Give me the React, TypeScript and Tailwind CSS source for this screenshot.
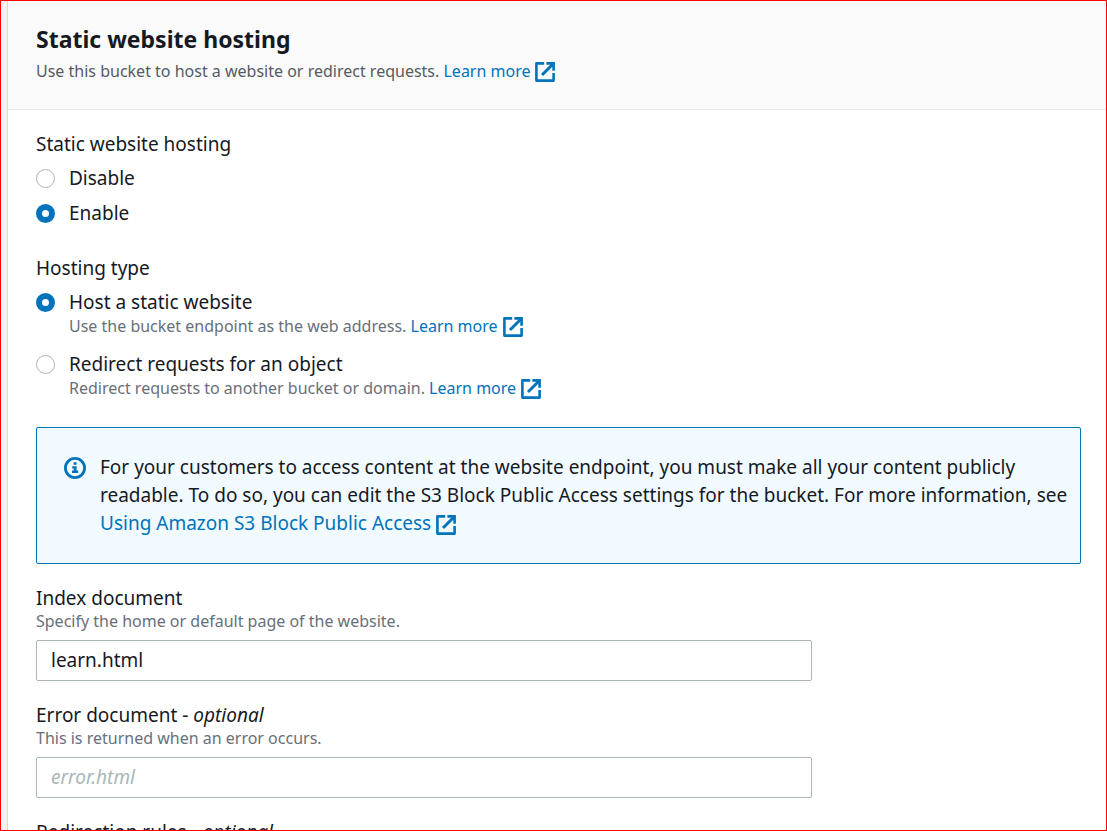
import { useState } from "react";
import type { ReactNode } from "react";

function ExternalIcon() {
  return (
    <svg
      className="ml-[5px] inline-block h-5 w-5 shrink-0 align-[-5px]"
      viewBox="0 0 20 20"
      fill="none"
      stroke="currentColor"
      strokeWidth="2.6"
      strokeLinejoin="round"
      aria-hidden="true"
    >
      <path d="M9.2 1.4H1.4v17.2h17.2V11" />
      <path d="M11.4 1.4h7.2v7.4" strokeLinejoin="miter" />
      <path d="M18 2 7 13" strokeWidth="3" />
    </svg>
  );
}

function InfoIcon() {
  return (
    <svg className="mt-1 h-[22px] w-[22px] shrink-0 text-[#0073bb]" viewBox="0 0 22 22" aria-hidden="true">
      <circle cx="11" cy="11" r="9.6" fill="none" stroke="currentColor" strokeWidth="2.8" />
      <path
        fill="currentColor"
        d="M9.6 5.2h3v2.6h-3zM8.2 9.2h4.4v4.4h1.6v2.4H8v-2.4h1.7v-2H8.2z"
      />
    </svg>
  );
}

function ExternalLink({ children }: { children: ReactNode }) {
  return (
    <a href="#" className="text-[#0073bb] hover:underline">
      {children}
      <ExternalIcon />
    </a>
  );
}

type RadioProps = {
  id: string;
  name: string;
  label: string;
  checked: boolean;
  onChange: () => void;
  children?: ReactNode;
};

function Radio({ id, name, label, checked, onChange, children }: RadioProps) {
  return (
    <div className="flex items-start gap-3.5">
      <input
        id={id}
        type="radio"
        name={name}
        checked={checked}
        onChange={onChange}
        className="mt-[3px] h-[19px] w-[19px] shrink-0 appearance-none rounded-full border border-[#aab7b8] bg-white checked:border-6 checked:border-[#0073bb]"
      />
      <div>
        <label htmlFor={id} className="block leading-6">
          {label}
        </label>
        {children && <p className="text-base leading-6 text-[#687078]">{children}</p>}
      </div>
    </div>
  );
}

type FieldProps = {
  id: string;
  label: string;
  optional?: boolean;
  hint: string;
  value?: string;
  placeholder?: string;
};

function Field({ id, label, optional, hint, value, placeholder }: FieldProps) {
  return (
    <div className="mt-[22px] max-w-[776px]">
      <label htmlFor={id} className="block leading-6">
        {label}
        {optional && (
          <>
            {" - "}
            <i>optional</i>
          </>
        )}
      </label>
      <p className="text-base leading-[22px] text-[#687078]">{hint}</p>
      <input
        id={id}
        type="text"
        defaultValue={value}
        placeholder={placeholder}
        className="mt-2 block h-[41px] w-full rounded-xs border border-[#aab7b8] bg-white px-3.5 pb-0.5 placeholder:text-[#aab7b8] placeholder:italic"
      />
    </div>
  );
}

export default function App() {
  const [enabled, setEnabled] = useState(true);
  const [redirect, setRedirect] = useState(false);

  return (
    <div className="h-screen overflow-hidden border border-[#ff0000] bg-[#f2f3f3] pl-1.5 font-['Noto_Sans',sans-serif] text-[19px] text-[#16191f]">
      <main className="min-h-full border-l border-[#d5dbdb] bg-white">
        <header className="border-b border-[#eaeded] bg-[#fafafa] px-7 pt-[23px] pb-[26px]">
          <h1 className="text-[23px] leading-[30px] font-bold">Static website hosting</h1>
          <p className="mt-[5px] text-base leading-6 text-[#545b64]">
            Use this bucket to host a website or redirect requests. <ExternalLink>Learn more</ExternalLink>
          </p>
        </header>

        <form className="pt-[22px] pr-[25px] pl-7">
          <fieldset>
            <legend className="leading-6">Static website hosting</legend>
            <div className="mt-2.5 flex flex-col gap-[11px]">
              <Radio id="disable" name="hosting" label="Disable" checked={!enabled} onChange={() => setEnabled(false)} />
              <Radio id="enable" name="hosting" label="Enable" checked={enabled} onChange={() => setEnabled(true)} />
            </div>
          </fieldset>

          <fieldset className="mt-[31px]">
            <legend className="leading-6">Hosting type</legend>
            <div className="mt-2.5 flex flex-col gap-3.5">
              <Radio
                id="static"
                name="type"
                label="Host a static website"
                checked={!redirect}
                onChange={() => setRedirect(false)}
              >
                Use the bucket endpoint as the web address. <ExternalLink>Learn more</ExternalLink>
              </Radio>
              <Radio
                id="redirect"
                name="type"
                label="Redirect requests for an object"
                checked={redirect}
                onChange={() => setRedirect(true)}
              >
                Redirect requests to another bucket or domain. <ExternalLink>Learn more</ExternalLink>
              </Radio>
            </div>
          </fieldset>

          <div className="mt-[27px] flex gap-3.5 rounded-xs border border-[#0073bb] bg-[#f1faff] pt-[25px] pr-2 pb-[26px] pl-[27px]">
            <InfoIcon />
            <p className="leading-7">
              For your customers to access content at the website endpoint, you must make all your content publicly
              readable. To do so, you can edit the S3 Block Public Access settings for the bucket. For more information,
              see <ExternalLink>Using Amazon S3 Block Public Access</ExternalLink>
            </p>
          </div>

          <Field id="index" label="Index document" hint="Specify the home or default page of the website." value="learn.html" />
          <Field id="error" label="Error document" optional hint="This is returned when an error occurs." placeholder="error.html" />

          <div className="mt-[22px]">
            <label htmlFor="rules" className="block leading-6">
              Redirection rules - <i>optional</i>
            </label>
            <textarea id="rules" className="mt-2 block h-40 w-full rounded-xs border border-[#aab7b8] bg-white px-3.5" />
          </div>
        </form>
      </main>
    </div>
  );
}
